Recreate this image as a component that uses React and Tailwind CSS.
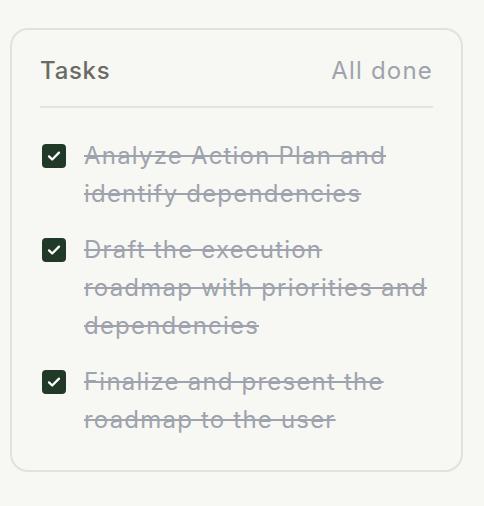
import React from 'react';

const tasks = [
  'Analyze Action Plan and identify dependencies',
  'Draft the execution roadmap with priorities and dependencies',
  'Finalize and present the roadmap to the user',
];

function CheckBox() {
  return (
    <div className="mt-[7px] flex h-6 w-6 shrink-0 items-center justify-center rounded-[4px] bg-[#213a27]">
      <svg width="16" height="16" viewBox="0 0 24 24" fill="none">
        <path d="M4.5 12.5l4.8 4.8L19.5 7" stroke="#fff" strokeWidth="3.4" strokeLinecap="round" strokeLinejoin="round" />
      </svg>
    </div>
  );
}

export default function App() {
  return (
    <div className="min-h-[506px] bg-[#f7f7f3] pt-[28px] pl-[10px]" style={{ fontFamily: 'Inter, "Noto Sans", sans-serif' }}>
      <div className="w-[453px] rounded-[18px] border-2 border-[#e1e1dd] px-[28px] pt-[22px] pb-[31px]">
        <div className="flex items-center justify-between border-b-2 border-[#e3e3df] pb-[16px]">
          <span className="text-[24px] leading-[38px] font-medium tracking-[0.03em] text-[#6b6b66]">Tasks</span>
          <span className="text-[24px] leading-[38px] tracking-[0.05em] text-[#9fa3ad]">All done</span>
        </div>
        <div className="mt-[29px] flex flex-col gap-[18px]">
          {tasks.map((t) => (
            <div key={t} className="flex gap-[18px] pl-[2px]">
              <CheckBox />
              <span className="text-[24px] leading-[38px] tracking-[0.05em] text-[#9fa3ad] line-through decoration-[#9fa3ad] decoration-2">{t}</span>
            </div>
          ))}
        </div>
      </div>
    </div>
  );
}
